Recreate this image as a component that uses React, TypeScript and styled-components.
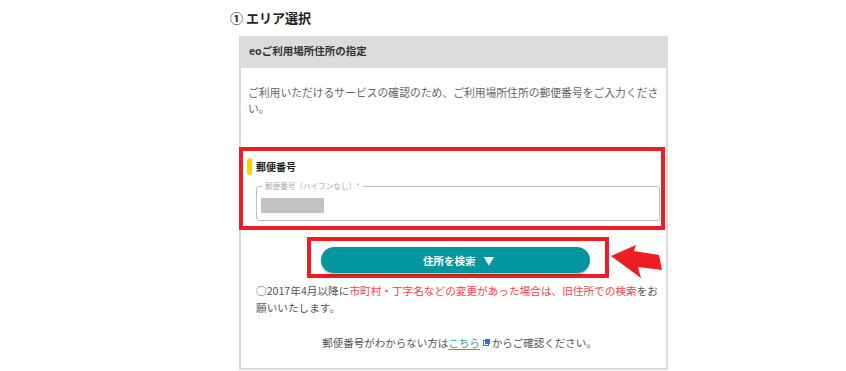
import React from 'react';
import styled, { createGlobalStyle } from 'styled-components';

const GlobalStyle = createGlobalStyle`
    html, body {
        margin: 0;
        padding: 0;
        background: #fff;
    }
    body {
        font-family: "Noto Sans CJK JP", "Noto Sans", sans-serif;
        color: #555;
    }
`;

const Page = styled.div`
    width: 846px;
    height: 371px;
    padding: 8px 0 0 230px;
    box-sizing: border-box;
    overflow: hidden;
`;
const Heading = styled.h2`
    margin: 0 0 8px;
    font-size: 13px;
    line-height: 20px;
    font-weight: 700;
    color: #222;
`;
const Card = styled.div`
    margin-left: 9px;
    width: 429px;
    box-sizing: border-box;
    border: 2px solid #dcdcdc;
    border-top: 0;
`;
const CardHead = styled.div`
    background: #dcdcdc;
    margin: 0 -2px;
    padding: 8px 10px 10px;
    font-size: 10.5px;
    line-height: 14px;
    font-weight: 700;
    color: #333;
`;
const Intro = styled.p`
    margin: 0;
    padding: 16px 7px 0;
    font-size: 10.8px;
    line-height: 16px;
    color: #666;
    white-space: nowrap;
`;
const Marked = styled.div`
    border: 4px solid #ee1c25;
`;
const ZipSection = styled(Marked)`
    margin: 31px 1px 0 -2px;
    padding: 7px 1px 5px 4px;
`;
const FieldLabel = styled.div`
    display: flex;
    align-items: center;
    gap: 4px;
    height: 17px;
    font-size: 10px;
    font-weight: 700;
    color: #222;
`;
const LabelBar = styled.span`
    width: 5px;
    height: 17px;
    border-radius: 3px;
    background: #ffd200;
`;
const InputBox = styled.div`
    position: relative;
    margin: 11px 0 0 9px;
    height: 35px;
    box-sizing: border-box;
    border: 1px solid #bdbdbd;
    border-radius: 3px;
    padding: 11px 4px 0;
`;
const Legend = styled.span`
    position: absolute;
    top: -6px;
    left: 5px;
    padding: 0 3px;
    background: #fff;
    font-size: 7.6px;
    line-height: 10px;
    color: #aaa;
    white-space: nowrap;
`;
const Filled = styled.div`
    width: 63px;
    height: 15px;
    background: #c2c2c2;
`;
const ButtonRow = styled.div`
    position: relative;
    display: flex;
    padding: 7px 0 0 66px;
`;
const ButtonMark = styled(Marked)`
    width: 302px;
    box-sizing: border-box;
    padding: 6px 15px 1px 10px;
`;
const SearchButton = styled.button`
    display: flex;
    align-items: center;
    justify-content: center;
    gap: 8px;
    width: 269px;
    height: 26px;
    border: 0;
    border-radius: 13px;
    background: #04969f;
    box-shadow: 0 2px 2px rgba(0, 0, 0, 0.25);
    color: #fff;
    font-family: inherit;
    font-size: 10.5px;
    font-weight: 700;
    padding: 0 0 0 6px;
`;
const Arrow = styled.svg`
    position: absolute;
    left: 370px;
    top: 15px;
`;
const Notice = styled.p`
    margin: 4px 0 0;
    padding: 0 0 0 15px;
    font-size: 10.65px;
    line-height: 17px;
    color: #555;
    white-space: nowrap;
`;
const Red = styled.span`
    color: #f2434b;
`;
const Help = styled.p`
    margin: 18px 0 0;
    padding: 0 0 17px 12px;
    text-align: center;
    font-size: 10.5px;
    line-height: 17px;
    color: #555;
`;
const Link = styled.a`
    color: #3d9ea6;
    text-decoration: underline;
    text-underline-offset: 2px;
`;
const ExtIcon = styled.svg`
    margin: 0 2px 0 3px;
    vertical-align: 1px;
`;

const App = () => {
    return (
        <Page>
            <GlobalStyle />
            <Heading>① エリア選択</Heading>
            <Card>
                <CardHead>eoご利用場所住所の指定</CardHead>
                <Intro>
                    ご利用いただけるサービスの確認のため、ご利用場所住所の郵便番号をご入力くださ
                    <br />
                    い。
                </Intro>
                <ZipSection>
                    <FieldLabel>
                        <LabelBar />
                        郵便番号
                    </FieldLabel>
                    <InputBox>
                        <Legend>郵便番号（ハイフンなし）*</Legend>
                        <Filled />
                    </InputBox>
                </ZipSection>
                <ButtonRow>
                    <ButtonMark>
                        <SearchButton>
                            住所を検索
                            <span>▼</span>
                        </SearchButton>
                    </ButtonMark>
                    <Arrow width="52" height="36" viewBox="0 0 52 36">
                        <polygon
                            points="0,11 25,0 23,6 48,10 51,25 27,22 30,33"
                            fill="#ee1c25"
                        />
                    </Arrow>
                </ButtonRow>
                <Notice>
                    ○2017年4月以降に
                    <Red>市町村・丁字名などの変更があった場合は、旧住所での検索</Red>
                    をお
                    <br />
                    願いいたします。
                </Notice>
                <Help>
                    郵便番号がわからない方は<Link href="#">こちら</Link>
                    <ExtIcon width="7" height="7" viewBox="0 0 7 7">
                        <rect x="0.5" y="1.5" width="5" height="5" fill="none" stroke="#3a6fd8" />
                        <rect x="2" y="0" width="5" height="5" fill="#3a6fd8" />
                    </ExtIcon>
                    からご確認ください。
                </Help>
            </Card>
        </Page>
    );
};

export default App;
